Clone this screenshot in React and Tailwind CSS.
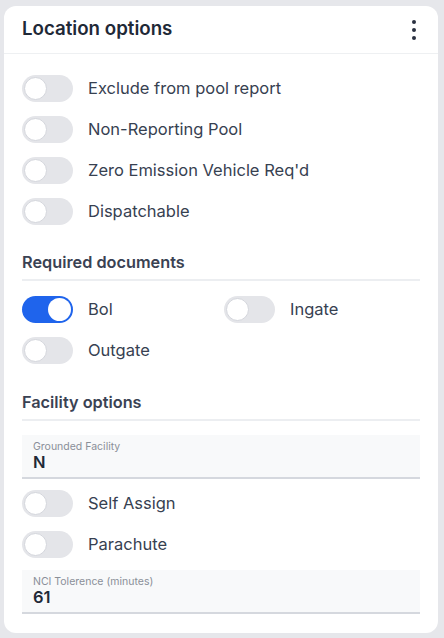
import React from 'react'

function Toggle({ on }) {
  return (
    <div
      className={
        'relative w-[51px] h-[27px] shrink-0 rounded-full ' +
        (on ? 'bg-[#1f64ec]' : 'bg-[#e4e5e9]')
      }
    >
      <div
        className={
          'absolute top-[2px] w-[23px] h-[23px] rounded-full bg-white ' +
          (on ? 'left-[26px]' : 'left-[2px] border border-[#d4d6dc]')
        }
      />
    </div>
  )
}

function ToggleRow({ label, on }) {
  return (
    <div className="h-[41px] flex items-center gap-[15px]">
      <Toggle on={on} />
      <span className="text-[16.5px] text-[#374151]">{label}</span>
    </div>
  )
}

function SectionTitle({ children, className }) {
  return (
    <div className={'border-b-2 border-[#eceef1] pb-[6px] ' + className}>
      <h3 className="text-[16.3px] leading-[21px] font-semibold text-[#3a4253]">{children}</h3>
    </div>
  )
}

function Field({ label, value, className }) {
  return (
    <div className={'h-[44px] bg-[#f8f9fa] border-b-2 border-[#d5d8de] px-[11px] pt-[6px] ' + className}>
      <div className="text-[10.5px] leading-[12px] text-[#8a8f98]">{label}</div>
      <div className="text-[16.5px] leading-[19px] font-semibold text-[#1f2937]">{value}</div>
    </div>
  )
}

export default function App() {
  return (
    <div
      className="min-h-[638px] bg-[#e6e7eb] pt-[6px] pl-[4px] pr-[6px] pb-[6px]"
      style={{ fontFamily: 'Inter, "Noto Sans", sans-serif' }}
    >
      <div className="bg-white rounded-[12px]">
        {/* header */}
        <div className="h-[48px] px-[18px] flex items-center justify-between border-b border-[#eef0f2]">
          <h2 className="text-[18.7px] font-semibold text-[#1f2937]">Location options</h2>
          <div className="flex flex-col gap-[4px] items-center pr-[4px]">
            <span className="w-[4px] h-[4px] rounded-full bg-[#2a3140]" />
            <span className="w-[4px] h-[4px] rounded-full bg-[#2a3140]" />
            <span className="w-[4px] h-[4px] rounded-full bg-[#2a3140]" />
          </div>
        </div>

        <div className="px-[18px] pt-[14px] pb-[19px]">
          <ToggleRow label="Exclude from pool report" />
          <ToggleRow label="Non-Reporting Pool" />
          <ToggleRow label="Zero Emission Vehicle Req'd" />
          <ToggleRow label="Dispatchable" />

          <SectionTitle className="mt-[20px]">Required documents</SectionTitle>
          <div className="mt-[8px] grid grid-cols-[202px_1fr]">
            <ToggleRow label="Bol" on />
            <ToggleRow label="Ingate" />
            <ToggleRow label="Outgate" />
          </div>

          <SectionTitle className="mt-[21px]">Facility options</SectionTitle>
          <Field className="mt-[14px]" label="Grounded Facility" value="N" />
          <div className="mt-[4px]">
            <ToggleRow label="Self Assign" />
            <ToggleRow label="Parachute" />
          </div>
          <Field className="mt-[5px]" label="NCI Tolerence (minutes)" value="61" />
        </div>
      </div>
    </div>
  )
}
